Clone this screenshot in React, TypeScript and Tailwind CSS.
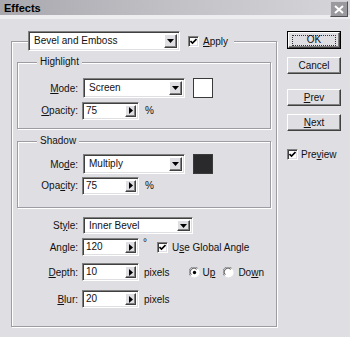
import React from 'react'

const bg = 'bg-[#dfdee3]'
const sunken =
  'border border-t-[#808080] border-l-[#808080] border-r-white border-b-white shadow-[inset_1px_1px_0_#404040,inset_-1px_-1px_0_#dfdee3]'
const raised =
  'border border-t-white border-l-white border-r-[#404040] border-b-[#404040] shadow-[inset_-1px_-1px_0_#808080]'

const Mn = ({ children }: { children: React.ReactNode }) => <span className="underline underline-offset-[1px]">{children}</span>

const Select = ({ value, className }: { value: string; className: string }) => (
  <div className={`${sunken} ${className} flex items-stretch bg-white p-[2px]`}>
    <span className="flex-1 flex items-center pl-[3px] leading-none">{value}</span>
    <div className={`${raised} ${bg} w-[13px] flex items-center justify-center`}>
      <svg width="7" height="4" viewBox="0 0 7 4">
        <polygon points="0,0 7,0 3.5,4" fill="#000" />
      </svg>
    </div>
  </div>
)

const Spin = ({ value }: { value: string }) => (
  <div className={`${sunken} w-[57px] h-[18px] flex items-stretch bg-white p-[2px]`}>
    <span className="flex-1 flex items-center pl-[1px] leading-none">{value}</span>
    <div className={`${raised} ${bg} w-[11px] flex items-center justify-center`}>
      <svg width="4" height="7" viewBox="0 0 4 7">
        <polygon points="0,0 4,3.5 0,7" fill="#000" />
      </svg>
    </div>
  </div>
)

const Check = () => (
  <div className={`${sunken} w-[11px] h-[11px] bg-white flex items-center justify-center`}>
    <svg width="7" height="7" viewBox="0 0 7 7">
      <path d="M0.5 3 L2.5 5 L6.5 1" stroke="#000" strokeWidth="1.6" fill="none" />
    </svg>
  </div>
)

const Radio = ({ on }: { on?: boolean }) => (
  <svg width="11" height="11" viewBox="0 0 12 12">
    <circle cx="6" cy="6" r="5.5" fill="#fff" />
    <path d="M1.5 9.5 A5.5 5.5 0 0 1 9.5 1.5" stroke="#808080" strokeWidth="1" fill="none" />
    <path d="M2.5 8.5 A4.2 4.2 0 0 1 8.5 2.5" stroke="#404040" strokeWidth="1" fill="none" />
    {on && <circle cx="6" cy="6" r="1.8" fill="#000" />}
  </svg>
)

const Button = ({ children, main }: { children: React.ReactNode; main?: boolean }) =>
  main ? (
    <div className="w-[54px] h-[18px] border border-black">
      <div className={`${raised} ${bg} h-full flex items-center justify-center`}>
        <div className="border border-dotted border-[#333] w-[44px] h-[11px] flex items-center justify-center leading-none">
          {children}
        </div>
      </div>
    </div>
  ) : (
    <div className={`${raised} ${bg} w-[54px] h-[17px] flex items-center justify-center leading-none`}>{children}</div>
  )

const group = 'border border-[#9d9ca2] shadow-[1px_1px_0_#fff,inset_1px_1px_0_#fff]'

export default function App() {
  return (
    <div className={`w-[350px] h-[337px] ${bg} text-[10px] text-[#111] font-['Liberation_Sans',Arial,sans-serif] overflow-hidden`}>
      <div className="h-[15px] bg-gradient-to-r from-[#a9a8ae] via-[#c2c1c6] to-[#d6d5da] flex items-center justify-between">
        <span className="pl-[4px] pt-[2px] text-[11px] font-bold text-black leading-none">Effects</span>
        <div className="mr-[2px] mt-[3px] w-[18px] h-[16px] bg-[#9a999e] border border-t-[#d0d0d4] border-l-[#d0d0d4] border-r-[#505055] border-b-[#505055] flex items-center justify-center">
          <svg width="10" height="9" viewBox="0 0 10 9">
            <path d="M1 1 L9 8 M9 1 L1 8" stroke="#fff" strokeWidth="2" />
          </svg>
        </div>
      </div>
      <div className="h-[4px] bg-[#ededf0]" />

      <div className="flex pl-[11px] pt-[12px]">
        <fieldset className={`${group} w-[266px] h-[296px] px-[5px] pb-[18px]`}>
          <legend className={`${bg} ml-[11px] pr-[6px] flex items-center`}>
            <Select value="Bevel and Emboss" className="w-[152px] h-[20px]" />
            <div className="ml-[8px]">
              <Check />
            </div>
            <span className="ml-[4px]">
              <Mn>A</Mn>pply
            </span>
          </legend>

          <fieldset className={`${group} mt-[5px] pt-[10px] pb-[8px]`}>
            <legend className={`${bg} ml-[19px] px-[3px] h-[12px] leading-[12px]`}>Highlight</legend>
            <div className="flex items-center h-[20px]">
              <span className="w-[60px] text-right">
                <Mn>M</Mn>ode:
              </span>
              <Select value="Screen" className="ml-[5px] w-[102px] h-[20px]" />
              <div className="ml-[8px] w-[20px] h-[20px] bg-white border border-[#3a3a3a]" />
            </div>
            <div className="flex items-center h-[19px] mt-[3px]">
              <span className="w-[60px] text-right">
                <Mn>O</Mn>pacity:
              </span>
              <div className="ml-[4px]">
                <Spin value="75" />
              </div>
              <span className="ml-[6px]">%</span>
            </div>
          </fieldset>

          <fieldset className={`${group} mt-[6px] pt-[7px] pb-[12px]`}>
            <legend className={`${bg} ml-[19px] px-[3px] h-[12px] leading-[12px]`}>Shadow</legend>
            <div className="flex items-center h-[20px]">
              <span className="w-[60px] text-right">
                Mo<Mn>d</Mn>e:
              </span>
              <Select value="Multiply" className="ml-[5px] w-[102px] h-[20px]" />
              <div className="ml-[8px] w-[20px] h-[20px] bg-[#2a2a2c] border border-[#3a3a3a]" />
            </div>
            <div className="flex items-center h-[19px] mt-[2px]">
              <span className="w-[60px] text-right">
                Opa<Mn>c</Mn>ity:
              </span>
              <div className="ml-[4px]">
                <Spin value="75" />
              </div>
              <span className="ml-[6px]">%</span>
            </div>
          </fieldset>

          <div className="flex items-center h-[17px] mt-[9px]">
            <span className="w-[61px] text-right">
              St<Mn>y</Mn>le:
            </span>
            <Select value="Inner Bevel" className="ml-[5px] w-[110px] h-[17px]" />
          </div>
          <div className="flex items-center h-[18px] mt-[4px]">
            <span className="w-[61px] text-right">
              An<Mn>g</Mn>le:
            </span>
            <div className="ml-[4px]">
              <Spin value="120" />
            </div>
            <span className="ml-[4px] self-start leading-[10px]">°</span>
            <div className="ml-[10px]">
              <Check />
            </div>
            <span className="ml-[4px]">
              U<Mn>s</Mn>e Global Angle
            </span>
          </div>
          <div className="flex items-center h-[18px] mt-[7px]">
            <span className="w-[61px] text-right">
              <Mn>D</Mn>epth:
            </span>
            <div className="ml-[4px]">
              <Spin value="10" />
            </div>
            <span className="ml-[5px]">pixels</span>
            <div className="ml-[19px] flex">
              <Radio on />
            </div>
            <span className="ml-[3px]">
              U<Mn>p</Mn>
            </span>
            <div className="ml-[8px] flex">
              <Radio />
            </div>
            <span className="ml-[4px]">
              Do<Mn>w</Mn>n
            </span>
          </div>
          <div className="flex items-center h-[18px] mt-[9px]">
            <span className="w-[61px] text-right">
              <Mn>B</Mn>lur:
            </span>
            <div className="ml-[4px]">
              <Spin value="20" />
            </div>
            <span className="ml-[5px]">pixels</span>
          </div>
        </fieldset>

        <div className="ml-[10px] flex flex-col">
          <Button main>OK</Button>
          <div className="mt-[8px]">
            <Button>Cancel</Button>
          </div>
          <div className="mt-[15px]">
            <Button>
              <Mn>P</Mn>rev
            </Button>
          </div>
          <div className="mt-[8px]">
            <Button>
              <Mn>N</Mn>ext
            </Button>
          </div>
          <div className="mt-[16px] flex items-center">
            <Check />
            <span className="ml-[3px]">
              Pre<Mn>v</Mn>iew
            </span>
          </div>
        </div>
      </div>
    </div>
  )
}
